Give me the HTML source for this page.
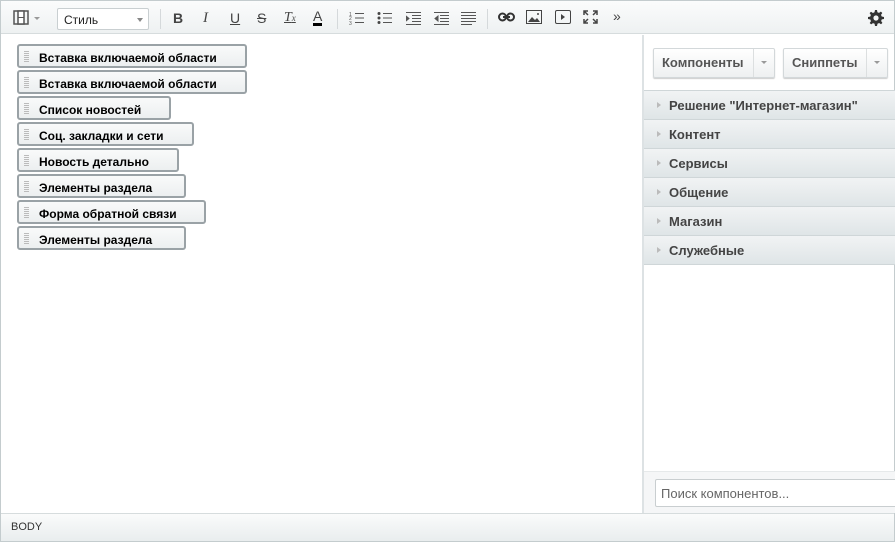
<!DOCTYPE html>
<html><head><meta charset="utf-8"><style>
*{box-sizing:border-box;margin:0;padding:0}
body{width:895px;height:542px;overflow:hidden;background:#fff;font-family:"Liberation Sans",Arial,sans-serif;position:relative}
.frame{position:absolute;left:0;top:0;width:895px;height:542px;border:1px solid #c4ccce}
.tb{position:absolute;left:1px;top:1px;width:893px;height:33px;background:linear-gradient(#fbfcfc,#eef1f2);border-bottom:1px solid #d6dcdd}
.ic{position:absolute;top:9px;font-size:14px;color:#444;line-height:16px}
.sel{position:absolute;left:56px;top:7px;width:92px;height:22px;background:#fff;border:1px solid #c9cfd1;border-radius:2px;font-size:12px;padding:4px 0 0 6px;color:#222}
.sel:after{content:"";position:absolute;right:5px;top:9px;border:3px solid transparent;border-top:4px solid #888}
.sep{position:absolute;top:8px;width:1px;height:20px;background:#d5d9db}
.blk{position:absolute;left:17px;height:24px;border:2px solid #9aa2a6;border-radius:3px;background:linear-gradient(#f9fafa,#eceff0);font-size:12px;font-weight:bold;color:#000;padding:5px 0 0 20px}
.blk:before{content:"";position:absolute;left:5px;top:5px;width:5px;height:11px;background:repeating-linear-gradient(#bbb 0 1px,transparent 1px 2px)}
.rp{position:absolute;left:642px;top:35px;width:252px;height:478px;border-left:2px solid #dde2e4;background:#fff}
.btn{position:absolute;top:13px;height:30px;border:1px solid #d3d8da;border-radius:2px;background:linear-gradient(#fff,#eef0f1);box-shadow:0 1px 1px #ccc;font-size:13px;font-weight:bold;color:#555;padding:6px 0 0 8px}
.btn i{position:absolute;right:0;top:0;width:21px;height:28px;border-left:1px solid #dcdfe0}
.btn i:after{content:"";position:absolute;left:7px;top:12px;border:3px solid transparent;border-top:3px solid #999}
.cat{position:absolute;left:0;width:252px;height:29px;background:linear-gradient(#f1f3f4,#dfe5e7);border-top:1px solid #cfd6d8;font-size:13px;font-weight:bold;color:#444;padding:7px 0 0 25px}
.cat:before{content:"";position:absolute;left:13px;top:11px;border:3px solid transparent;border-left:4px solid #bbb}
.srch{position:absolute;left:0;top:436px;width:252px;height:42px;background:#f5f6f7;border-top:1px solid #e6e9ea}
.srch div{position:absolute;left:11px;top:7px;width:245px;height:28px;border:1px solid #c9ced0;border-radius:2px;background:#fff;font-size:13px;color:#666;padding:6px 0 0 5px;border-left:1px solid #c9ced0}
.bot{position:absolute;left:1px;top:513px;width:893px;height:28px;background:linear-gradient(#fafbfb,#e9edee);border-top:1px solid #d6dcdd;font-size:11px;color:#333;padding:7px 0 0 10px}
</style></head><body>
<div class="frame"></div>
<div class="tb">
<svg style="position:absolute;left:12px;top:9px" width="16" height="15"><rect x="1" y="1" width="14" height="13" fill="none" stroke="#555" stroke-width="1.5"/><rect x="5" y="1" width="6" height="13" fill="#fff" stroke="#555" stroke-width="1.5"/><line x1="5" y1="7.5" x2="11" y2="7.5" stroke="#555"/></svg>
<div style="position:absolute;left:33px;top:16px;border:3px solid transparent;border-top:3px solid #999"></div>
<div class="sel">Стиль</div>
<div class="sep" style="left:159px"></div>
<div class="ic" style="left:172px;font-weight:bold">B</div>
<div class="ic" style="left:202px;font-style:italic;font-family:'Liberation Serif',serif;font-size:15px">I</div>
<div class="ic" style="left:229px;text-decoration:underline">U</div>
<div class="ic" style="left:256px;text-decoration:line-through">S</div>
<div class="ic" style="left:283px;font-style:italic;text-decoration:underline;font-family:'Liberation Serif',serif">T<span style="font-size:9px">x</span></div>
<div class="ic" style="left:312px;border-bottom:3px solid #000;line-height:13px">A</div>
<div class="sep" style="left:336px"></div>
<svg style="position:absolute;left:348px;top:10px" width="15" height="14" stroke="#555"><path d="M6 2.5h9M6 7h9M6 11.5h9"/><text x="0" y="5" font-size="5" fill="#555" stroke="none">1</text><text x="0" y="9" font-size="5" fill="#555" stroke="none">2</text><text x="0" y="14" font-size="5" fill="#555" stroke="none">3</text></svg>
<svg style="position:absolute;left:376px;top:10px" width="15" height="14"><g fill="#444"><circle cx="2" cy="2.5" r="1.5"/><circle cx="2" cy="7" r="1.5"/><circle cx="2" cy="11.5" r="1.5"/></g><path d="M6 2.5h9M6 7h9M6 11.5h9" stroke="#555"/></svg>
<svg style="position:absolute;left:405px;top:10px" width="15" height="14" stroke="#555"><path d="M0 1.5h15M6 4.5h9M6 7.5h9M6 10.5h9M0 13.5h15"/><path d="M0 5l3 2.5-3 2.5z" fill="#555"/></svg>
<svg style="position:absolute;left:433px;top:10px" width="15" height="14" stroke="#555"><path d="M0 1.5h15M6 4.5h9M6 7.5h9M6 10.5h9M0 13.5h15"/><path d="M4 5l-3 2.5 3 2.5z" fill="#555"/></svg>
<svg style="position:absolute;left:460px;top:10px" width="15" height="14" stroke="#555"><path d="M0 1.5h15M0 4.5h15M0 7.5h15M0 10.5h15M0 13.5h11"/></svg>
<div class="sep" style="left:486px"></div>
<svg style="position:absolute;left:497px;top:11px" width="17" height="10" fill="none" stroke="#333" stroke-width="2"><rect x="1" y="1.5" width="7" height="7" rx="3.5"/><rect x="9" y="1.5" width="7" height="7" rx="3.5"/><path d="M5 5h7"/></svg>
<svg style="position:absolute;left:525px;top:9px" width="16" height="14"><rect x="0.5" y="0.5" width="15" height="13" fill="none" stroke="#444"/><path d="M2 12l4-5 3 3 2-2 3 4z" fill="#444"/><circle cx="12" cy="4" r="1" fill="#444"/></svg>
<svg style="position:absolute;left:554px;top:9px" width="16" height="14"><rect x="0.5" y="0.5" width="15" height="13" rx="1.5" fill="none" stroke="#444"/><path d="M6 4l4 3-4 3z" fill="#444"/></svg>
<svg style="position:absolute;left:582px;top:9px" width="15" height="14" fill="none" stroke="#444" stroke-width="1.5"><path d="M1 5V1h4M1 1l4 4M14 5V1h-4M14 1l-4 4M1 9v4h4M1 13l4-4M14 9v4h-4M14 13l-4-4"/></svg>
<div class="ic" style="left:612px;font-size:14px;top:7px">»</div>
<svg style="position:absolute;left:867px;top:9px" width="16" height="16" viewBox="0 0 16 16"><path fill="#333" d="M7 0h2l.4 2.2 1.6.7 1.9-1.3 1.4 1.4-1.3 1.9.7 1.6L16 7v2l-2.2.4-.7 1.6 1.3 1.9-1.4 1.4-1.9-1.3-1.6.7L9 16H7l-.4-2.2-1.6-.7-1.9 1.3-1.4-1.4 1.3-1.9-.7-1.6L0 9V7l2.2-.4.7-1.6L1.6 3.1 3 1.7l1.9 1.3 1.6-.7z"/><circle cx="8" cy="8" r="2.6" fill="#f3f5f5"/></svg>
</div>
<div class="blk" style="top:44px;width:230px">Вставка включаемой области</div>
<div class="blk" style="top:70px;width:230px">Вставка включаемой области</div>
<div class="blk" style="top:96px;width:154px">Список новостей</div>
<div class="blk" style="top:122px;width:177px">Соц. закладки и сети</div>
<div class="blk" style="top:148px;width:162px">Новость детально</div>
<div class="blk" style="top:174px;width:169px">Элементы раздела</div>
<div class="blk" style="top:200px;width:189px">Форма обратной связи</div>
<div class="blk" style="top:226px;width:169px">Элементы раздела</div>
<div class="rp">
<div class="btn" style="left:9px;width:122px">Компоненты<i></i></div>
<div class="btn" style="left:139px;width:105px">Сниппеты<i></i></div>
<div class="cat" style="top:55px">Решение "Интернет-магазин"</div>
<div class="cat" style="top:84px">Контент</div>
<div class="cat" style="top:113px">Сервисы</div>
<div class="cat" style="top:142px">Общение</div>
<div class="cat" style="top:171px">Магазин</div>
<div class="cat" style="top:200px;border-bottom:1px solid #cfd6d8;height:30px">Служебные</div>
<div class="srch"><div>Поиск компонентов...</div></div>
</div>
<div class="bot">BODY</div>
</body></html>
